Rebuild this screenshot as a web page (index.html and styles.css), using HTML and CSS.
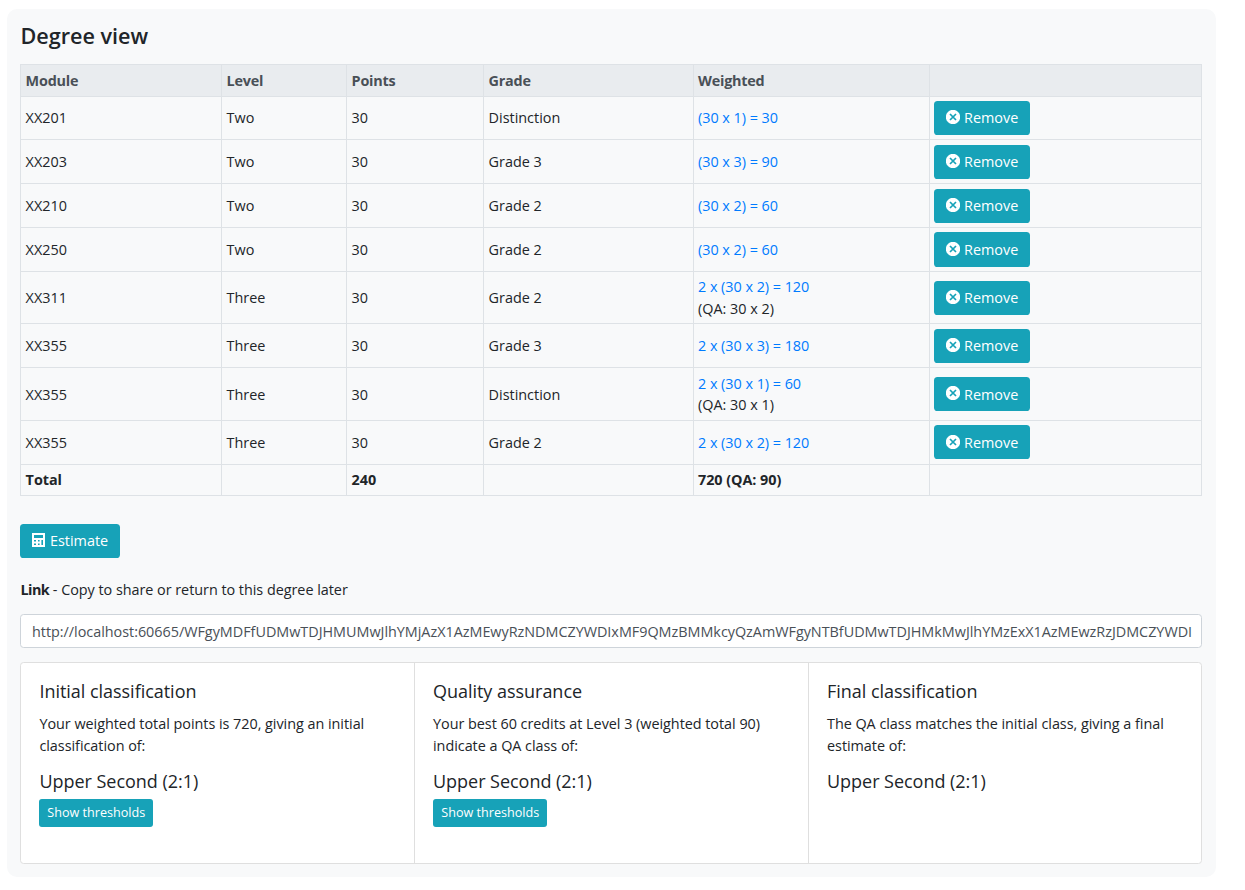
FILE: index.html
```
<!DOCTYPE html>
<html lang="en">
<head>
<meta charset="utf-8">
<title>Degree view</title>
<link rel="stylesheet" href="styles.css">
</head>
<body>
<svg class="sprite" aria-hidden="true">
  <symbol id="i-remove" viewBox="0 0 14 14">
    <circle cx="7" cy="7" r="7.2" fill="#fff"/>
    <path d="M4 4l6 6M10 4l-6 6" stroke="#17a2b8" stroke-width="1.7"/>
  </symbol>
  <symbol id="i-calc" viewBox="0 0 13 14">
    <path fill="#fff" fill-rule="evenodd" d="M0 0h13v14H0zM2 2v3h9V2zM2 7v1.6h2V7zM6 7v1.6h1.6V7zM9.4 7v5H11V7zM2 10.4V12h2v-1.6zM6 10.4V12h1.6v-1.6z"/>
  </symbol>
</svg>
<main class="panel">
  <h1 class="title">Degree view</h1>
  <table class="modules">
    <colgroup><col class="c-module"><col class="c-level"><col class="c-points"><col class="c-grade"><col class="c-weighted"><col class="c-action"></colgroup>
    <thead>
      <tr class="r-head"><th>Module</th><th>Level</th><th>Points</th><th>Grade</th><th>Weighted</th><th></th></tr>
    </thead>
    <tbody>
      <tr class="r-first"><td>XX201</td><td>Two</td><td>30</td><td>Distinction</td><td><a>(30 x 1) = 30</a></td><td><button class="btn"><svg class="icon"><use href="#i-remove"/></svg>Remove</button></td></tr>
      <tr><td>XX203</td><td>Two</td><td>30</td><td>Grade 3</td><td><a>(30 x 3) = 90</a></td><td><button class="btn"><svg class="icon"><use href="#i-remove"/></svg>Remove</button></td></tr>
      <tr><td>XX210</td><td>Two</td><td>30</td><td>Grade 2</td><td><a>(30 x 2) = 60</a></td><td><button class="btn"><svg class="icon"><use href="#i-remove"/></svg>Remove</button></td></tr>
      <tr><td>XX250</td><td>Two</td><td>30</td><td>Grade 2</td><td><a>(30 x 2) = 60</a></td><td><button class="btn tall"><svg class="icon"><use href="#i-remove"/></svg>Remove</button></td></tr>
      <tr class="r-qa"><td>XX311</td><td>Three</td><td>30</td><td>Grade 2</td><td><a>2 x (30 x 2) = 120</a><br>(QA: 30 x 2)</td><td><button class="btn"><svg class="icon"><use href="#i-remove"/></svg>Remove</button></td></tr>
      <tr><td>XX355</td><td>Three</td><td>30</td><td>Grade 3</td><td><a>2 x (30 x 3) = 180</a></td><td><button class="btn"><svg class="icon"><use href="#i-remove"/></svg>Remove</button></td></tr>
      <tr class="r-qa-tall"><td>XX355</td><td>Three</td><td>30</td><td>Distinction</td><td class="tight"><a>2 x (30 x 1) = 60</a><br>(QA: 30 x 1)</td><td><button class="btn low"><svg class="icon"><use href="#i-remove"/></svg>Remove</button></td></tr>
      <tr class="r-last"><td>XX355</td><td>Three</td><td>30</td><td>Grade 2</td><td><a>2 x (30 x 2) = 120</a></td><td><button class="btn low all"><svg class="icon"><use href="#i-remove"/></svg>Remove</button></td></tr>
      <tr class="r-total"><td>Total</td><td></td><td>240</td><td></td><td>720 (QA: 90)</td><td></td></tr>
    </tbody>
  </table>
  <button class="btn estimate"><svg class="icon"><use href="#i-calc"/></svg>Estimate</button>
  <p class="link-label"><strong>Link</strong> - Copy to share or return to this degree later</p>
  <div class="link-box"><span class="link-text">http://localhost:60665/WFgyMDFfUDMwTDJHMUMwJlhYMjAzX1AzMEwyRzNDMCZYWDIxMF9QMzBMMkcyQzAmWFgyNTBfUDMwTDJHMkMwJlhYMzExX1AzMEwzRzJDMCZYWDI</span></div>
  <section class="cards">
    <article class="card">
      <h2>Initial classification</h2>
      <p>Your weighted total points is 720, giving an initial classification of:</p>
      <h2 class="result">Upper Second (2:1)</h2>
      <button class="btn small">Show thresholds</button>
    </article>
    <article class="card">
      <h2>Quality assurance</h2>
      <p>Your best 60 credits at Level 3 (weighted total 90) indicate a QA class of:</p>
      <h2 class="result">Upper Second (2:1)</h2>
      <button class="btn small">Show thresholds</button>
    </article>
    <article class="card">
      <h2>Final classification</h2>
      <p>The QA class matches the initial class, giving a final estimate of:</p>
      <h2 class="result">Upper Second (2:1)</h2>
    </article>
  </section>
</main>
</body>
</html>
```
FILE: styles.css
```
* { box-sizing: border-box; }
body {
  margin: 0;
  padding: 9px 0 0 7px;
  background: #fff;
  color: #212529;
  font: 14.4px/21.6px "Open Sans", "Noto Sans", sans-serif;
}
.sprite { display: none; }
.panel {
  width: 1209px;
  height: 868px;
  padding: 14px 14px 0 13px;
  border-radius: 10px;
  background: #f8f9fa;
}
.title { margin: 0 0 15px; padding-left: .5px; font-size: 21.6px; line-height: 26px; font-weight: 600; }
.modules {
  width: 1182px;
  table-layout: fixed;
  border-collapse: separate;
  border-spacing: 0;
  border: solid #dee2e6;
  border-width: 1px 0 0 1px;
}
.c-module { width: 201px; }
.c-level { width: 125px; }
.c-points { width: 137px; }
.c-grade { width: 210px; }
.c-weighted { width: 236px; }
.c-action { width: 272px; }
.modules tr { height: 44px; }
.modules .r-head { height: 32px; }
.modules .r-first { height: 43px; }
.modules .r-qa { height: 52px; }
.modules .r-qa-tall { height: 53px; }
.modules .r-total { height: 31px; font-weight: 700; letter-spacing: -.05px; }
.modules th, .modules td {
  padding: 0 4px 0 4.6px;
  border: solid #dee2e6;
  border-width: 0 1px 1px 0;
  text-align: left;
  vertical-align: middle;
}
.modules td:nth-child(5), .modules th:nth-child(5), .modules td:last-child { padding-left: 4px; }
.modules .r-qa-tall td:not(:last-child):not(.tight) { padding-top: 1px; }
.modules .tight { padding-bottom: 1px; line-height: 21px; }
.modules .r-last td:last-child { padding-bottom: 2px; }
.modules th { background: #e9ecef; color: #495057; font-weight: 700; letter-spacing: -.22px; }
.modules a { color: #007bff; letter-spacing: -.03px; }
.btn {
  display: flex;
  align-items: center;
  width: 96px;
  height: 34px;
  padding: 0 0 0 12px;
  border: 0;
  border-radius: 3.6px;
  background: #17a2b8;
  color: #fff;
  font: inherit;
}
.tall { height: 35px; }
.icon { width: 14px; height: 14px; margin: -2px 4px 0 0; overflow: visible; }
.low { padding-top: 2px; }
.low .icon { margin-top: -4px; }
.all .icon { margin-top: -2px; }
.estimate { width: 100px; margin-top: 28px; }
.estimate .icon { width: 13px; margin-right: 5px; }
.link-label { margin: 21px 0 13px; padding-left: .6px; letter-spacing: -.03px; }
.link-label strong { letter-spacing: -.6px; }
.link-box {
  display: flex;
  align-items: center;
  width: 1182px;
  height: 34px;
  padding: 2px 8px 0 11px;
  border: 1px solid #ced4da;
  border-radius: 3.6px;
  background: #fff;
  color: #495057;
}
.link-text { white-space: nowrap; letter-spacing: -.022px; }
.cards {
  display: flex;
  width: 1182px;
  height: 202px;
  margin-top: 14px;
  border: 1px solid #dfdfdf;
  border-radius: 3.6px;
  background: #fff;
}
.card { width: 394px; padding: 18px; border-right: 1px solid #dfdfdf; }
.card:last-child { width: 392px; border-right: 0; }
.card h2 { margin: 0 0 11px; font-size: 18px; line-height: 21.6px; font-weight: 400; letter-spacing: -.03px; }
.card:first-child h2, .card:first-child p { padding-left: .4px; }
.card p { margin: 0 0 15px; letter-spacing: -.03px; }
.card .result { margin-bottom: 6px; }
.small { width: 114px; height: 28px; padding-left: 8.3px; border-radius: 2.9px; font-size: 12.6px; }
```
